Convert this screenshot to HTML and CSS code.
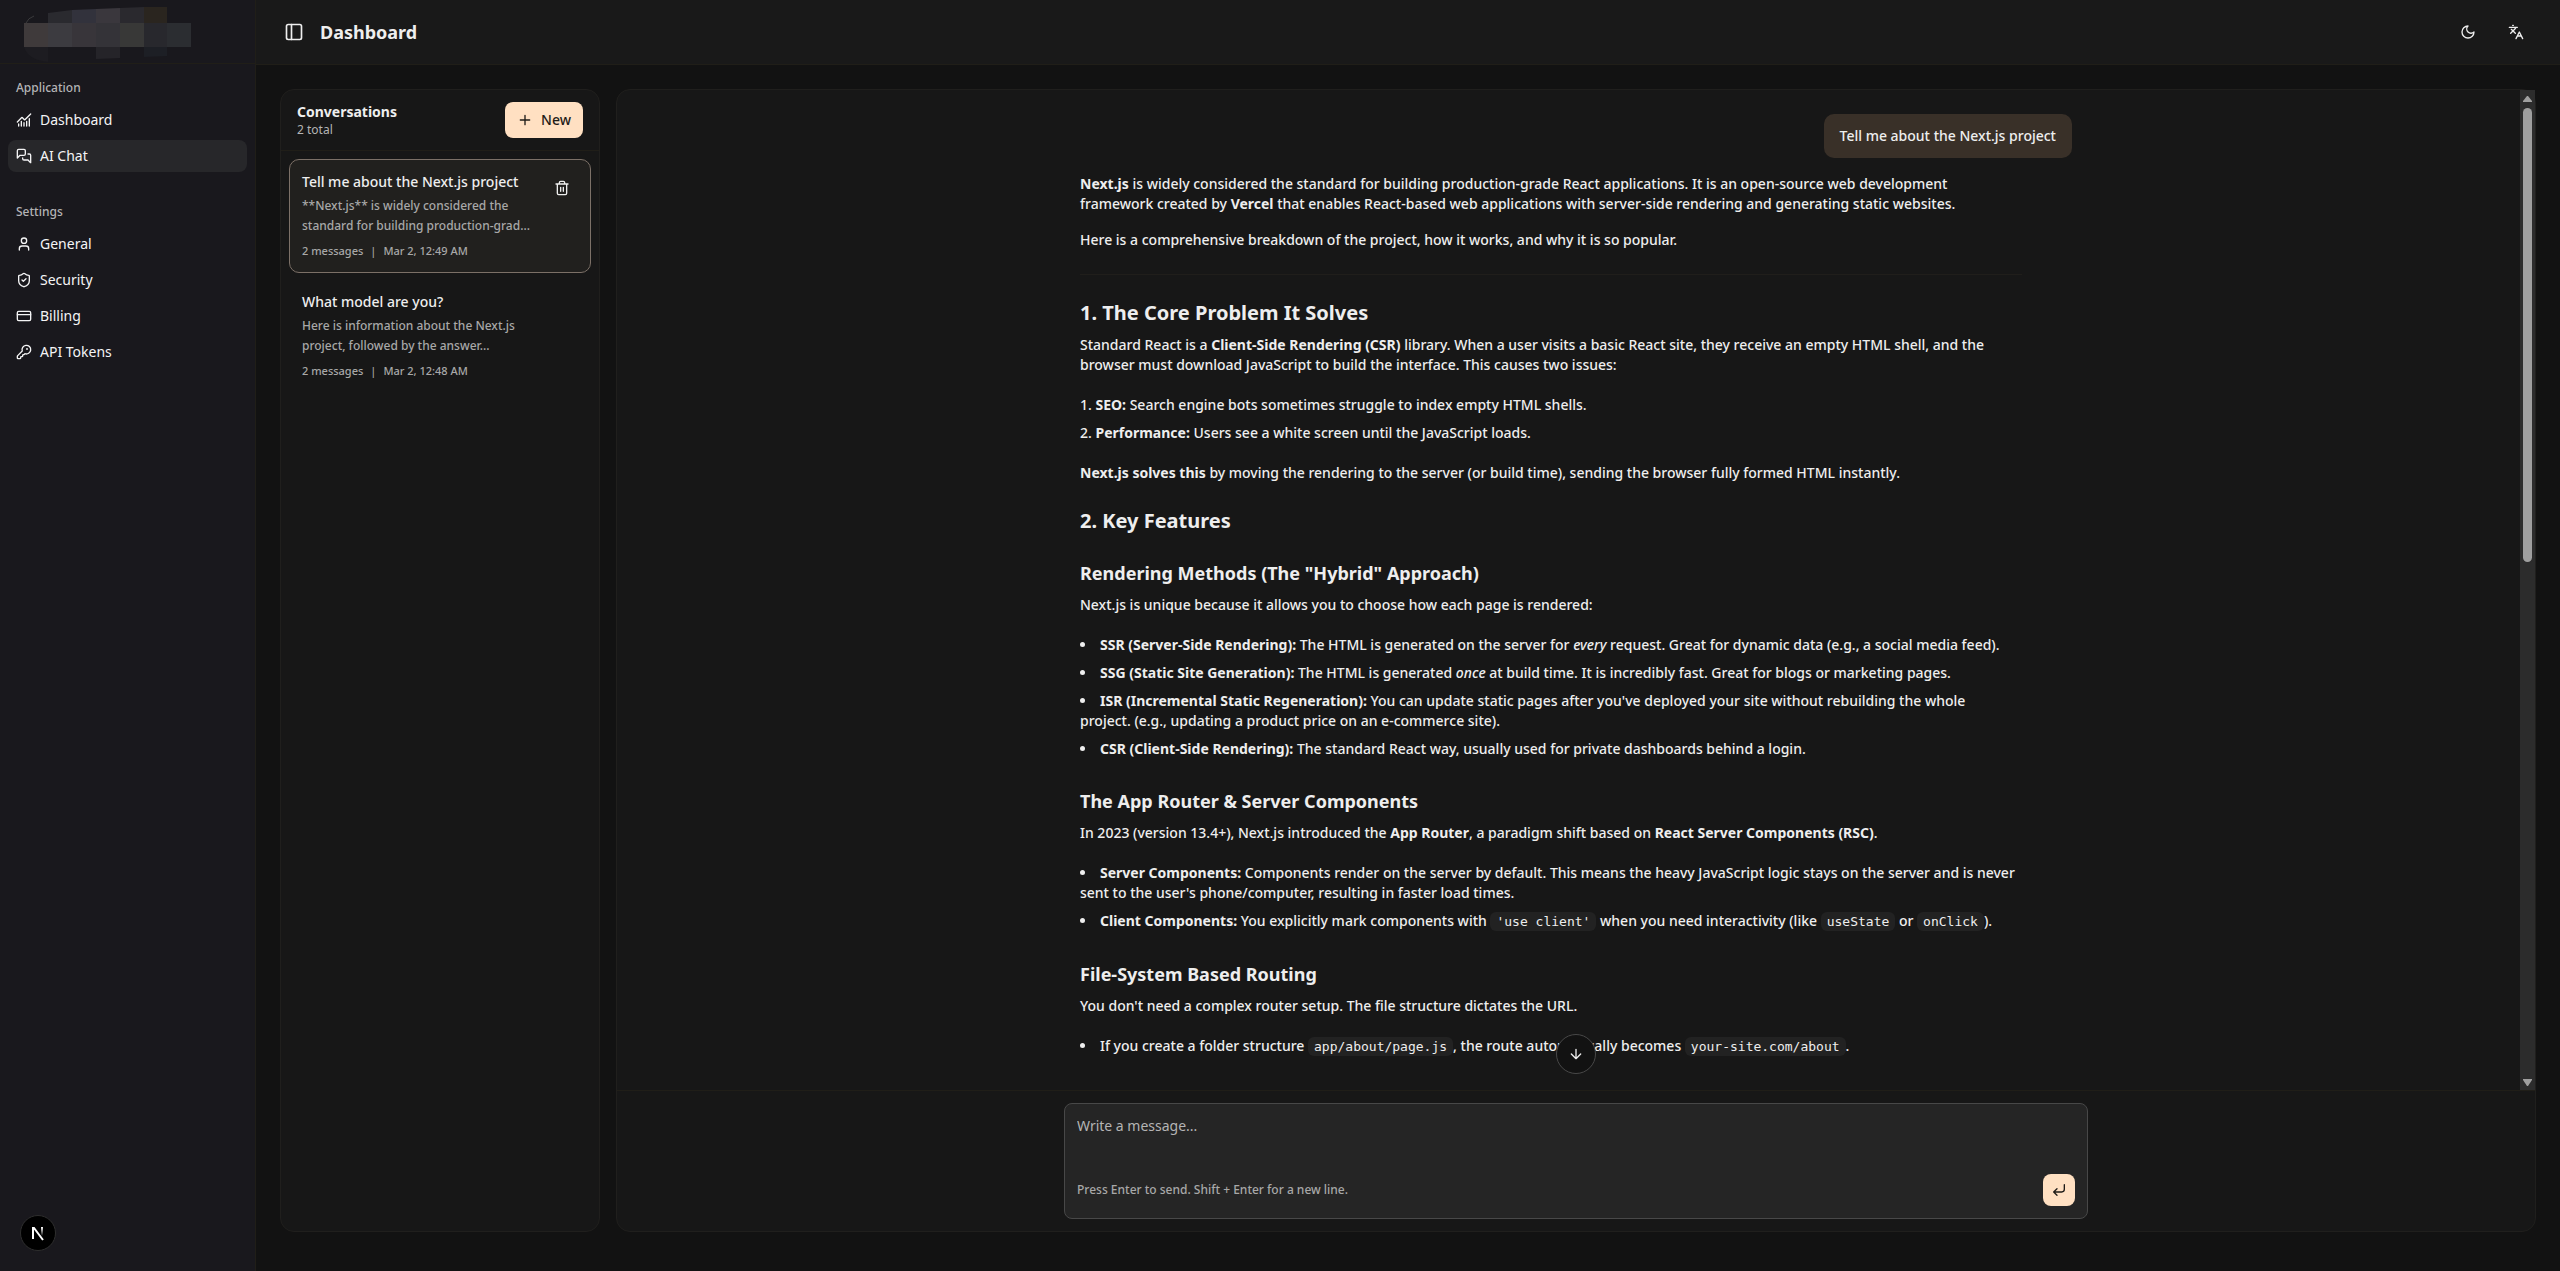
FILE: index.html
```html
<!DOCTYPE html>
<html lang="en">
<head>
    <meta charset="UTF-8">
    <meta name="viewport" content="width=device-width, initial-scale=1.0">
    <title>Dashboard - AI Chat</title>
    <link rel="stylesheet" href="styles.css">
</head>
<body>
    <aside class="sidebar">
        <div class="sidebar-header">
            <!-- redacted brand -->
            <svg class="brand" width="200" height="63" viewBox="0 0 200 63" aria-hidden="true">
                <path d="M26 23q2-5 8-7" fill="none" stroke="#3a3a3c"/>
                <path d="M48 13l24-3v13H48z" fill="#2a2a2f"/>
                <path d="M72 10l24-1v14H72z" fill="#32323c"/>
                <path d="M96 9l24-1v15H96z" fill="#3a373d"/>
                <path d="M120 8l24-1v16h-24z" fill="#2a292e"/>
                <path d="M144 7h23v16h-23z" fill="#2a251f"/>
                <path d="M24 23h24v24H24z" fill="#3f3a3b"/>
                <path d="M48 23h24v24H48z" fill="#3c3b40"/>
                <path d="M72 23h24v24H72z" fill="#38353a"/>
                <path d="M96 23h24v24H96z" fill="#343338"/>
                <path d="M120 23h24v24h-24z" fill="#383837"/>
                <path d="M144 23h23v24h-23z" fill="#28282d"/>
                <path d="M167 23h24v24h-24z" fill="#2b2d31"/>
                <path d="M24 47h24v15q-20-2-24-15z" fill="#1d1c21"/>
                <path d="M96 47h24v11l-24 1z" fill="#252429"/>
                <path d="M144 47h23v9l-23 1z" fill="#1d1f25"/>
            </svg>
        </div>
        <nav class="nav">
            <div class="nav-group">
                <div class="nav-label">Application</div>
                <a class="nav-item" href="#">
                    <svg class="icon" viewBox="0 0 24 24"><path d="M12 16v5M16 14v7M20 10v11M22 3l-8.646 8.646a.5.5 0 0 1-.708 0L9.354 8.354a.5.5 0 0 0-.707 0L2 15M4 18v3M8 14v7"/></svg>
                    Dashboard
                </a>
                <a class="nav-item active" href="#">
                    <svg class="icon" viewBox="0 0 24 24"><path d="M14 9a2 2 0 0 1-2 2H6l-4 4V4a2 2 0 0 1 2-2h8a2 2 0 0 1 2 2z"/><path d="M18 9h2a2 2 0 0 1 2 2v11l-4-4h-6a2 2 0 0 1-2-2v-1"/></svg>
                    AI Chat
                </a>
            </div>
            <div class="nav-group">
                <div class="nav-label">Settings</div>
                <a class="nav-item" href="#">
                    <svg class="icon" viewBox="0 0 24 24"><path d="M19 21v-2a4 4 0 0 0-4-4H9a4 4 0 0 0-4 4v2"/><circle cx="12" cy="7" r="4"/></svg>
                    General
                </a>
                <a class="nav-item" href="#">
                    <svg class="icon" viewBox="0 0 24 24"><path d="M20 13c0 5-3.500 7.500-7.700 9a1 1 0 0 1-.7 0C7.500 20.500 4 18 4 13V6a1 1 0 0 1 1-1c2 0 4.500-1.200 6.200-2.700a1.200 1.200 0 0 1 1.500 0C14.500 3.800 17 5 19 5a1 1 0 0 1 1 1z"/><path d="m9 12 2 2 4-4"/></svg>
                    Security
                </a>
                <a class="nav-item" href="#">
                    <svg class="icon" viewBox="0 0 24 24"><rect x="2" y="5" width="20" height="14" rx="2"/><path d="M2 10h20"/></svg>
                    Billing
                </a>
                <a class="nav-item" href="#">
                    <svg class="icon" viewBox="0 0 24 24"><path d="M2.600 17.400A2 2 0 0 0 2 18.800V21a1 1 0 0 0 1 1h3a1 1 0 0 0 1-1v-1a1 1 0 0 1 1-1h1a1 1 0 0 0 1-1v-1a1 1 0 0 1 1-1h.2a2 2 0 0 0 1.400-.6l.8-.8a6.500 6.500 0 1 0-4-4z"/><circle cx="16.500" cy="7.500" r=".5"/></svg>
                    API Tokens
                </a>
            </div>
        </nav>
        <button class="next-badge" aria-label="Open Next.js Dev Tools">
            <svg width="18" height="18" viewBox="0 0 18 18">
                <defs>
                    <linearGradient id="fade" x1="0" y1="0" x2="0" y2="1">
                        <stop offset="0" stop-color="#fff"/>
                        <stop offset="1" stop-color="#fff" stop-opacity="0"/>
                    </linearGradient>
                </defs>
                <path d="M4 15V4h1l9 12" fill="none" stroke="#fff" stroke-width="2"/>
                <rect x="12" y="3" width="2" height="9" fill="url(#fade)"/>
            </svg>
        </button>
    </aside>

    <div class="page">
        <header class="topbar">
            <button class="icon-btn sidebar-toggle" aria-label="Toggle sidebar">
                <svg class="icon icon-lg" viewBox="0 0 24 24"><rect x="3" y="3" width="18" height="18" rx="2"/><path d="M9 3v18"/></svg>
            </button>
            <h1>Dashboard</h1>
            <div class="topbar-actions">
                <button class="icon-btn" aria-label="Toggle theme">
                    <svg class="icon" viewBox="0 0 24 24"><path d="M12 3a6 6 0 0 0 9 9 9 9 0 1 1-9-9z"/></svg>
                </button>
                <button class="icon-btn" aria-label="Language">
                    <svg class="icon" viewBox="0 0 24 24"><path d="m5 8 6 6M4 14l6-6 2-3M2 5h12M7 2h1M22 22l-5-10-5 10M14 18h6"/></svg>
                </button>
            </div>
        </header>

        <main class="content">
            <section class="conversations">
                <div class="conv-header">
                    <div>
                        <h2>Conversations</h2>
                        <p>2 total</p>
                    </div>
                    <button class="new-btn">
                        <svg class="icon" viewBox="0 0 24 24"><path d="M5 12h14M12 5v14"/></svg>
                        New
                    </button>
                </div>
                <div class="conv-list">
                    <div class="conv-item selected">
                        <div class="conv-text">
                            <h3>Tell me about the Next.js project</h3>
                            <p class="conv-preview">**Next.js** is widely considered the<br>standard for building production-grad...</p>
                            <p class="conv-meta"><span>2 messages</span><span>|</span><span>Mar 2, 12:49 AM</span></p>
                        </div>
                        <button class="delete-btn" aria-label="Delete conversation">
                            <svg class="icon" viewBox="0 0 24 24"><path d="M3 6h18M19 6v14a2 2 0 0 1-2 2H7a2 2 0 0 1-2-2V6M8 6V4a2 2 0 0 1 2-2h4a2 2 0 0 1 2 2v2M10 11v6M14 11v6"/></svg>
                        </button>
                    </div>
                    <div class="conv-item">
                        <div class="conv-text">
                            <h3>What model are you?</h3>
                            <p class="conv-preview">Here is information about the Next.js<br>project, followed by the answer...</p>
                            <p class="conv-meta"><span>2 messages</span><span>|</span><span>Mar 2, 12:48 AM</span></p>
                        </div>
                    </div>
                </div>
            </section>

            <section class="chat">
                <div class="chat-scroll">
                    <div class="messages">
                        <div class="bubble">Tell me about the Next.js project</div>
                        <article class="answer">
                            <p><strong>Next.js</strong> is widely considered the standard for building production-grade React applications. It is an open-source web development<br>framework created by <strong>Vercel</strong> that enables React-based web applications with server-side rendering and generating static websites.</p>
                            <p>Here is a comprehensive breakdown of the project, how it works, and why it is so popular.</p>
                            <hr>
                            <h2>1. The Core Problem It Solves</h2>
                            <p>Standard React is a <strong>Client-Side Rendering (CSR)</strong> library. When a user visits a basic React site, they receive an empty HTML shell, and the<br>browser must download JavaScript to build the interface. This causes two issues:</p>
                            <ol>
                                <li><strong>SEO:</strong> Search engine bots sometimes struggle to index empty HTML shells.</li>
                                <li><strong>Performance:</strong> Users see a white screen until the JavaScript loads.</li>
                            </ol>
                            <p><strong>Next.js solves this</strong> by moving the rendering to the server (or build time), sending the browser fully formed HTML instantly.</p>
                            <h2>2. Key Features</h2>
                            <h3>Rendering Methods (The "Hybrid" Approach)</h3>
                            <p>Next.js is unique because it allows you to choose how each page is rendered:</p>
                            <ul>
                                <li><strong>SSR (Server-Side Rendering):</strong> The HTML is generated on the server for <em>every</em> request. Great for dynamic data (e.g., a social media feed).</li>
                                <li><strong>SSG (Static Site Generation):</strong> The HTML is generated <em>once</em> at build time. It is incredibly fast. Great for blogs or marketing pages.</li>
                                <li><strong>ISR (Incremental Static Regeneration):</strong> You can update static pages after you've deployed your site without rebuilding the whole<br>project. (e.g., updating a product price on an e-commerce site).</li>
                                <li><strong>CSR (Client-Side Rendering):</strong> The standard React way, usually used for private dashboards behind a login.</li>
                            </ul>
                            <h3>The App Router &amp; Server Components</h3>
                            <p>In 2023 (version 13.4+), Next.js introduced the <strong>App Router</strong>, a paradigm shift based on <strong>React Server Components (RSC)</strong>.</p>
                            <ul>
                                <li><strong>Server Components:</strong> Components render on the server by default. This means the heavy JavaScript logic stays on the server and is never<br>sent to the user's phone/computer, resulting in faster load times.</li>
                                <li><strong>Client Components:</strong> You explicitly mark components with <code>'use client'</code> when you need interactivity (like <code>useState</code> or <code>onClick</code>).</li>
                            </ul>
                            <h3>File-System Based Routing</h3>
                            <p>You don't need a complex router setup. The file structure dictates the URL.</p>
                            <ul>
                                <li>If you create a folder structure <code>app/about/page.js</code>, the route automatically becomes <code>your-site.com/about</code>.</li>
                            </ul>
                        </article>
                    </div>
                    <div class="scrollbar" aria-hidden="true">
                        <svg width="15" height="18" viewBox="0 0 15 18"><path d="M7 6h1l4 5v1H3v-1z" fill="#9f9f9f"/></svg>
                        <div class="thumb"></div>
                        <svg width="15" height="18" viewBox="0 0 15 18"><path d="M3 7h9v1l-4 6H7L3 8z" fill="#9f9f9f"/></svg>
                    </div>
                    <button class="jump-btn" aria-label="Scroll to bottom">
                        <svg class="icon" viewBox="0 0 24 24"><path d="M12 5v14M19 12l-7 7-7-7"/></svg>
                    </button>
                </div>
                <form class="composer">
                    <div class="composer-box">
                        <textarea id="message" aria-label="Message" placeholder="Write a message..."></textarea>
                        <div class="composer-footer">
                            <label for="message">Press Enter to send. Shift + Enter for a new line.</label>
                            <button class="send-btn" type="button" aria-label="Send">
                                <svg class="icon" viewBox="0 0 24 24"><path d="M20 4v7a4 4 0 0 1-4 4H4M9 10l-5 5 5 5"/></svg>
                            </button>
                        </div>
                    </div>
                </form>
            </section>
        </main>
    </div>
</body>
</html>
```
FILE: styles.css
```css
* {
    box-sizing: border-box;
}

body {
    margin: 0;
    min-height: 100vh;
    display: flex;
    background-color: #121212;
    color: #eeeeee;
    font-family: 'Noto Sans', 'Open Sans', sans-serif;
    font-size: 14px;
    line-height: 20px;
}

h1, h2, h3, p, ul, ol {
    margin: 0;
    padding: 0;
}

button {
    display: flex;
    align-items: center;
    justify-content: center;
    padding: 0;
    border: none;
    background: none;
    color: inherit;
    font: inherit;
    cursor: pointer;
}

.icon {
    width: 16px;
    height: 16px;
    flex-shrink: 0;
    fill: none;
    stroke: currentColor;
    stroke-width: 2;
    stroke-linecap: round;
    stroke-linejoin: round;
}

.icon-lg {
    width: 20px;
    height: 20px;
}

/* Sidebar */
.sidebar {
    position: relative;
    flex: 0 0 256px;
    background-color: #19181d;
    border-right: 1px solid #201e18;
}

.sidebar-header {
    height: 64px;
    border-bottom: 1px solid #201e18;
}

.brand {
    display: block;
}

.nav-group {
    padding: 8px;
}

.nav-group + .nav-group {
    margin-top: 8px;
}

.nav-label {
    padding: 0 8px;
    font-size: 12px;
    line-height: 32px;
    font-weight: 500;
    color: #b4b4b6;
}

.nav-item {
    display: flex;
    align-items: center;
    gap: 8px;
    height: 32px;
    padding: 0 8px;
    border-radius: 8px;
    color: #f4f4f5;
    text-decoration: none;
}

.nav-item + .nav-item {
    margin-top: 4px;
}

.nav-item.active {
    background-color: #27272a;
}

.next-badge {
    position: absolute;
    left: 20px;
    bottom: 20px;
    width: 36px;
    height: 36px;
    border-radius: 50%;
    background-color: #000;
    border: 1px solid #2e2e2e;
}

/* Header */
.page {
    flex: 1;
    min-width: 0;
    display: flex;
    flex-direction: column;
}

.topbar {
    display: flex;
    align-items: center;
    gap: 12px;
    height: 65px;
    padding: 0 28px 0 24px;
    background-color: #191919;
    border-bottom: 1px solid #201e18;
}

.topbar h1 {
    font-size: 18px;
    line-height: 28px;
    font-weight: 700;
}

.topbar-actions {
    display: flex;
    gap: 16px;
    margin-left: auto;
}

.icon-btn {
    width: 32px;
    height: 32px;
}

.sidebar-toggle {
    width: 28px;
}

.content {
    flex: 1;
    display: flex;
    gap: 16px;
    padding: 24px 24px 39px;
}

/* Conversations */
.conversations {
    flex: 0 0 320px;
    background-color: #171717;
    border: 1px solid #201f1d;
    border-radius: 14px;
}

.conv-header {
    display: flex;
    align-items: center;
    justify-content: space-between;
    padding: 12px 16px;
    border-bottom: 1px solid #201e18;
}

.conv-header h2 {
    font-size: 14px;
    line-height: 20px;
    font-weight: 700;
}

.conv-header p {
    font-size: 12px;
    line-height: 16px;
    color: #b4b4b4;
}

.new-btn {
    gap: 8px;
    height: 36px;
    padding: 0 12px;
    border-radius: 8px;
    background-color: #ffe0c2;
    color: #1f1c18;
    font-weight: 500;
}

.conv-list {
    display: flex;
    flex-direction: column;
    gap: 6px;
    padding: 8px;
}

.conv-item {
    display: flex;
    justify-content: space-between;
    padding: 12px;
    border: 1px solid transparent;
    border-radius: 10px;
}

.conv-item.selected {
    background-color: #21201e;
    border-color: #7c7067;
}

.conv-item h3 {
    font-size: 14px;
    line-height: 20px;
    font-weight: 500;
}

.conv-preview {
    margin-top: 4px;
    font-size: 12px;
    line-height: 20px;
    font-weight: 500;
    color: #a8a8a8;
}

.conv-meta {
    display: flex;
    gap: 7px;
    margin: 7px 0 1px;
    font-size: 11px;
    line-height: 16px;
    font-weight: 500;
    color: #a8a8a8;
}

.delete-btn {
    width: 32px;
    height: 32px;
}

/* Chat */
.chat {
    flex: 1;
    min-width: 0;
    display: flex;
    flex-direction: column;
    background-color: #171717;
    border: 1px solid #201f1d;
    border-radius: 14px;
}

.chat-scroll {
    position: relative;
    flex: 1;
}

.messages {
    display: flex;
    flex-direction: column;
    gap: 16px;
    max-width: 1024px;
    margin: 0 auto;
    padding: 24px 16px;
    font-weight: 500;
}

.bubble {
    align-self: flex-end;
    padding: 12px 16px;
    border-radius: 10px;
    background-color: #393028;
}

.answer {
    width: 95%;
}

.answer p + p, .answer ul, .answer ol, .answer ol + p {
    margin-top: 16px;
}

.answer hr {
    height: 1px;
    margin: 24px 0;
    border: none;
    background-color: #201e1b;
}

.answer h2, .answer h3 {
    margin: 24px 0 8px;
    font-size: 18px;
    line-height: 28px;
    font-weight: 700;
}

.answer h2 {
    font-size: 20px;
}

.answer li {
    padding: 4px 0;
    list-style-position: inside;
}

.answer strong {
    font-weight: 700;
}

.answer code {
    padding: 2px 6px;
    border-radius: 6px;
    background-color: #222222;
    font-family: 'DejaVu Sans Mono', monospace;
    font-size: 13px;
}

.scrollbar {
    position: absolute;
    top: 0;
    right: 0;
    bottom: 0;
    display: flex;
    flex-direction: column;
    width: 15px;
    background-color: #2c2c2c;
}

.thumb {
    width: 9px;
    height: 454px;
    margin: 0 auto auto;
    border-radius: 5px;
    background-color: #9f9f9f;
}

.jump-btn {
    position: absolute;
    left: 50%;
    bottom: 16px;
    width: 40px;
    height: 40px;
    margin-left: -20px;
    border: 1px solid #484848;
    border-radius: 50%;
    background-color: #121212;
}

.composer {
    padding: 12px;
    border-top: 1px solid #201e18;
}

.composer-box {
    max-width: 1024px;
    margin: 0 auto;
    padding: 12px;
    border: 1px solid #484848;
    border-radius: 8px;
    background-color: #252525;
}

.composer textarea {
    display: block;
    width: 100%;
    height: 58px;
    padding: 0;
    border: none;
    outline: none;
    resize: none;
    background: none;
    color: inherit;
    font: inherit;
}

.composer textarea::placeholder {
    color: #b4b4b4;
}

.composer-footer {
    display: flex;
    align-items: center;
    justify-content: space-between;
    font-size: 12px;
    font-weight: 500;
    color: #a8a8a8;
}

.send-btn {
    width: 32px;
    height: 32px;
    border-radius: 8px;
    background-color: #ffe0c2;
    color: #1f1c18;
}
```
